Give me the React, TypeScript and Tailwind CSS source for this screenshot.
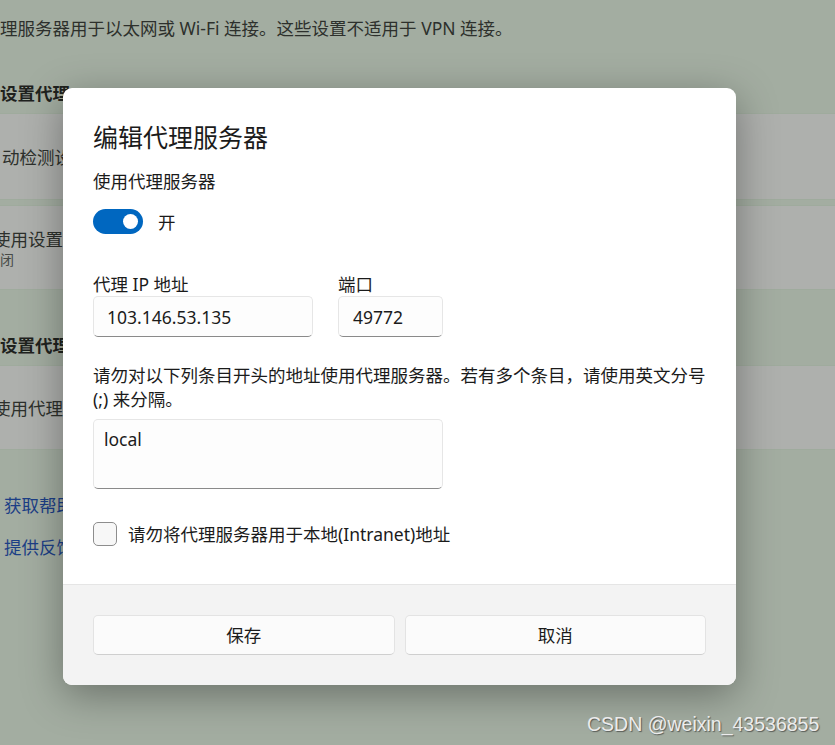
import React from "react";

const font = {
  fontFamily: '"Noto Sans", "Noto Sans CJK SC", sans-serif',
};

function SettingsBackdrop() {
  return (
    <div className="flex flex-col text-[17.5px] leading-[24px] text-[#2d302c]">
      <div className="h-[16px]" />
      <div className="whitespace-nowrap">
        理服务器用于以太网或 Wi-Fi 连接。这些设置不适用于 VPN 连接。
      </div>
      <div className="h-[41px]" />
      <div className="whitespace-nowrap font-semibold text-[#1f221e]">设置代理</div>
      <div className="h-[8px]" />
      <div className="flex h-[87px] items-center border-y border-[#9fab9d] bg-[#aeb0ad] pl-[2px]">
        <span className="whitespace-nowrap">动检测设置</span>
      </div>
      <div className="h-[5px]" />
      <div className="flex h-[85px] flex-col justify-center border-y border-[#9fab9d] bg-[#aeb0ad]">
        <span className="-ml-[7px] whitespace-nowrap">使用设置脚本</span>
        <span className="-ml-[14px] whitespace-nowrap text-[14px] leading-[18px] text-[#474a46]">关闭</span>
      </div>
      <div className="h-[43px]" />
      <div className="whitespace-nowrap font-semibold text-[#1f221e]">设置代理</div>
      <div className="h-[8px]" />
      <div className="flex h-[85px] items-center border-y border-[#9fab9d] bg-[#aeb0ad]">
        <span className="-ml-[7px] whitespace-nowrap">使用代理服务器</span>
      </div>
      <div className="h-[43px]" />
      <div className="whitespace-nowrap pl-[4px] text-[#1c3f86]">获取帮助</div>
      <div className="h-[18px]" />
      <div className="whitespace-nowrap pl-[4px] text-[#1c3f86]">提供反馈</div>
    </div>
  );
}

function Toggle() {
  return (
    <div className="flex h-[25px] w-[50px] items-center justify-end rounded-full bg-[#0067c0] pr-[5px]">
      <div className="h-[15px] w-[15px] rounded-full bg-white" />
    </div>
  );
}

function TextBox({ value, className }: { value: string; className: string }) {
  return (
    <div
      className={
        "flex h-[41px] items-center rounded-[5px] border border-[#e6e6e6] border-b-[#8a8a8a] bg-[#fdfdfd] text-[#1b1b1b] " +
        className
      }
    >
      {value}
    </div>
  );
}

function ProxyDialog() {
  return (
    <div className="absolute left-[63px] top-[88px] flex h-[597px] w-[673px] flex-col overflow-hidden rounded-[9px] bg-white shadow-[0_10px_40px_rgba(0,0,0,0.35)]">
      <div className="flex flex-1 flex-col px-[30px] pt-[33px] text-[17.5px] leading-[24px] text-[#1b1b1b]">
        <div className="text-[25px] leading-[32px] text-[#1b1b1b]">编辑代理服务器</div>
        <div className="mt-[16px]">使用代理服务器</div>
        <div className="mt-[16px] flex items-center gap-[15px]">
          <Toggle />
          <span>开</span>
        </div>
        <div className="mt-[39px] flex gap-[25px]">
          <div className="flex w-[220px] flex-col">
            <div className="leading-[23px]">代理 IP 地址</div>
            <TextBox value="103.146.53.135" className="pl-[13px]" />
          </div>
          <div className="flex w-[105px] flex-col">
            <div className="leading-[23px]">端口</div>
            <TextBox value="49772" className="pl-[14px]" />
          </div>
        </div>
        <div className="mt-[26px] flex flex-col">
          <span>请勿对以下列条目开头的地址使用代理服务器。若有多个条目，请使用英文分号</span>
          <span>(;) 来分隔。</span>
        </div>
        <div className="mt-[8px] h-[70px] w-[350px] rounded-[5px] border border-[#e6e6e6] border-b-[#8a8a8a] bg-[#fdfdfd] pl-[10px] pt-[7px]">
          local
        </div>
        <div className="mt-[33px] flex items-center gap-[11px]">
          <div className="h-[24px] w-[24px] rounded-[5px] border border-[#8d8d8d] bg-[#f7f7f7]" />
          <span>请勿将代理服务器用于本地(Intranet)地址</span>
        </div>
      </div>
      <div className="flex h-[101px] gap-[10px] border-t border-[#e5e5e5] bg-[#f3f3f3] px-[30px] pt-[30px]">
        <button className="flex h-[40px] flex-1 items-center justify-center rounded-[5px] border border-[#e3e3e3] border-b-[#cfcfcf] bg-[#fbfbfb] text-[17.5px] text-[#1b1b1b]">
          保存
        </button>
        <button className="flex h-[40px] flex-1 items-center justify-center rounded-[5px] border border-[#e3e3e3] border-b-[#cfcfcf] bg-[#fbfbfb] text-[17.5px] text-[#1b1b1b]">
          取消
        </button>
      </div>
    </div>
  );
}

export default function App() {
  return (
    <div
      className="relative h-[745px] w-[835px] overflow-hidden bg-[#a3ada1]"
      style={font}
    >
      <SettingsBackdrop />
      <ProxyDialog />
      <div
        className="absolute left-[587px] top-[712px] whitespace-nowrap text-[19.5px] leading-[24px] text-[#ececec] [text-shadow:1px_1px_1px_rgba(40,40,40,0.6)]"
        style={{ fontFamily: '"Liberation Sans", Arial, sans-serif' }}
      >
        CSDN @weixin_43536855
      </div>
    </div>
  );
}
